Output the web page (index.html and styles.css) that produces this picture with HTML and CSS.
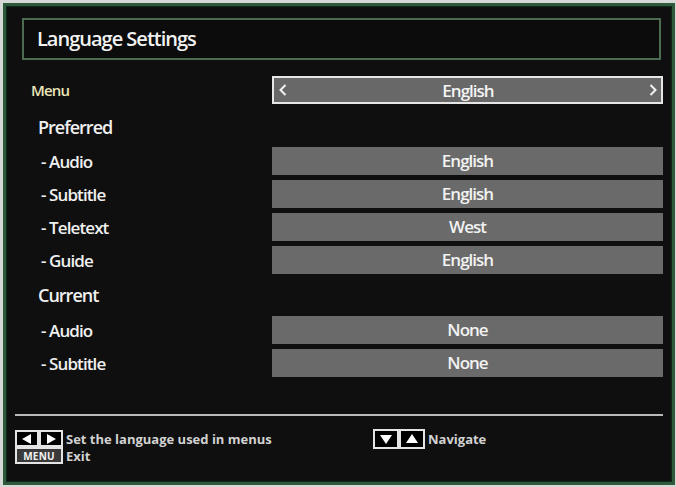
FILE: index.html
```html
<!DOCTYPE html>
<html lang="en">
<head>
<meta charset="utf-8">
<title>Language Settings</title>
<link rel="stylesheet" href="styles.css">
</head>
<body>
<div class="screen">
  <header class="title-box">
    <h1 class="title">Language Settings</h1>
  </header>

  <section class="settings">
    <div class="row">
      <span class="label label-menu">Menu</span>
      <div class="selector">
        <svg class="chev" viewBox="0 0 8 12" width="8" height="12"><polyline points="6.5,1 1.5,6 6.5,11" fill="none" stroke="#f2f2f2" stroke-width="2"/></svg>
        <span class="selector-text">English</span>
        <svg class="chev" viewBox="0 0 8 12" width="8" height="12"><polyline points="1.5,1 6.5,6 1.5,11" fill="none" stroke="#f2f2f2" stroke-width="2"/></svg>
      </div>
    </div>

    <div class="group-head">Preferred</div>
    <div class="row"><span class="label">- Audio</span><div class="value">English</div></div>
    <div class="row"><span class="label">- Subtitle</span><div class="value">English</div></div>
    <div class="row"><span class="label">- Teletext</span><div class="value">West</div></div>
    <div class="row"><span class="label">- Guide</span><div class="value">English</div></div>

    <div class="group-head group-current">Current</div>
    <div class="row"><span class="label">- Audio</span><div class="value">None</div></div>
    <div class="row"><span class="label">- Subtitle</span><div class="value">None</div></div>
  </section>

  <div class="separator"></div>

  <footer class="help">
    <div class="help-col">
      <div class="hint">
        <span class="keys">
          <span class="key"><svg viewBox="0 0 12 12" width="12" height="12"><polygon points="10,1 10,11 1,6" fill="#fff"/></svg></span>
          <span class="key"><svg viewBox="0 0 12 12" width="12" height="12"><polygon points="2,1 2,11 11,6" fill="#fff"/></svg></span>
        </span>
        <span class="hint-text">Set the language used in menus</span>
      </div>
      <div class="hint">
        <span class="key key-menu">MENU</span>
        <span class="hint-text">Exit</span>
      </div>
    </div>
    <div class="hint hint-nav">
      <span class="keys">
        <span class="key key-wide"><svg viewBox="0 0 14 12" width="14" height="12"><polygon points="1,2 13,2 7,11" fill="#fff"/></svg></span>
        <span class="key key-wide"><svg viewBox="0 0 14 12" width="14" height="12"><polygon points="1,10 13,10 7,1" fill="#fff"/></svg></span>
      </span>
      <span class="hint-text">Navigate</span>
    </div>
  </footer>
</div>
</body>
</html>
```

FILE: styles.css
```css
* { box-sizing: border-box; }

html, body {
  margin: 0;
  padding: 0;
}

body {
  background: #d6d9d6;
  font-family: "Open Sans", "DejaVu Sans", sans-serif;
  color: #f0f0f0;
}

.screen {
  margin: 3px;
  width: 672px;
  height: 482px;
  border: 3px solid #2d5a3b;
  box-shadow: inset 0 0 0 1px #13261a, inset 0 0 0 2px #0b140e;
  background: #0f0f0f;
  display: flex;
  flex-direction: column;
}

.title-box {
  margin: 12px 11px 0 16px;
  height: 42px;
  border: 2px solid #4d6b53;
  background: #0b0c0b;
  display: flex;
  align-items: center;
  padding-left: 13px;
}

.title {
  margin: 0;
  font-size: 20px;
  font-weight: 600;
  letter-spacing: -1px;
  color: #f2f2f2;
  line-height: 1;
}

.settings {
  flex: 1;
  margin: 16px 9px 0 16px;
  display: flex;
  flex-direction: column;
  gap: 5px;
}

.row {
  display: grid;
  grid-template-columns: 250px 1fr;
  height: 28px;
  align-items: center;
}

.label {
  font-size: 17px;
  font-weight: 600;
  letter-spacing: -0.9px;
  padding-left: 19px;
  color: #f0f0f0;
}

.label-menu {
  font-size: 15px;
  letter-spacing: -0.8px;
  padding-left: 9px;
  color: #ebe5b9;
}

.group-head {
  height: 33px;
  padding-top: 3px;
  line-height: 30px;
  padding-left: 16px;
  font-size: 18px;
  font-weight: 600;
  letter-spacing: -1px;
  color: #f0f0f0;
}

.group-current {
  height: 32px;
  padding-top: 1px;
}

.value {
  height: 28px;
  background: #6a6a6a;
  text-align: center;
  line-height: 28px;
  font-size: 17px;
  font-weight: 600;
  letter-spacing: -1px;
  color: #f2f2f2;
}

.selector {
  height: 28px;
  border: 2px solid #e6e6e6;
  background: #686868;
  display: flex;
  align-items: center;
  justify-content: space-between;
  padding: 0 4px 0 5px;
}

.selector-text {
  font-size: 17px;
  font-weight: 600;
  letter-spacing: -1px;
  color: #f4f4f4;
}

.chev { display: block; }

.separator {
  height: 2px;
  margin: 0 9px;
  background: #b9b9b9;
}

.help {
  display: grid;
  grid-template-columns: 358px auto;
  padding: 14px 0 18px 9px;
  align-items: start;
}

.help-col {
  display: flex;
  flex-direction: column;
}

.hint {
  display: flex;
  align-items: center;
  height: 17px;
}

.hint-nav {
  height: 20px;
  margin-top: -1px;
}

.keys {
  display: flex;
}

.key {
  width: 24px;
  height: 17px;
  border: 2px solid #e4e4e4;
  background: #000;
  display: flex;
  align-items: center;
  justify-content: center;
}

.key svg { display: block; }

.key-wide {
  width: 26px;
  height: 20px;
}

.key-menu {
  width: 48px;
  font-size: 10px;
  font-weight: 700;
  letter-spacing: 0.2px;
  color: #f2f2f2;
  background: #3a3a3a;
}

.hint-text {
  margin-left: 3px;
  font-size: 13px;
  font-weight: 700;
  letter-spacing: 0;
  color: #d2d2d2;
}
```
